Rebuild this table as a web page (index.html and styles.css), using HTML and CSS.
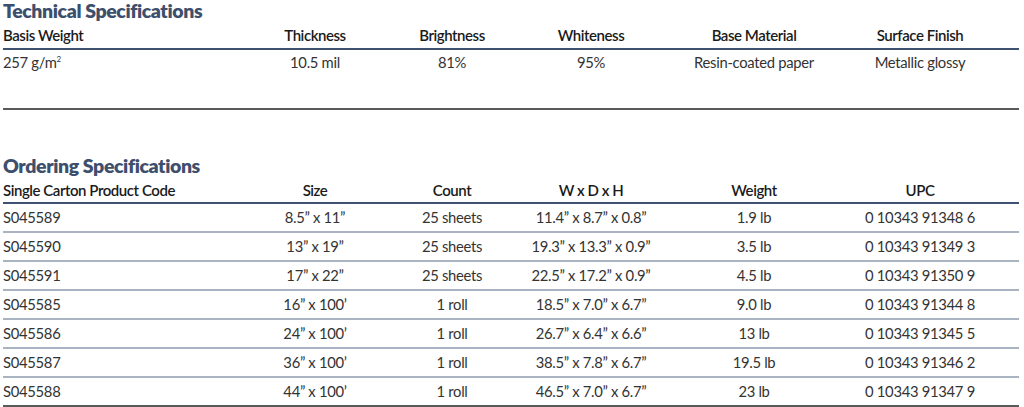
FILE: index.html
```html
<!DOCTYPE html>
<html lang="en">
<head>
<meta charset="utf-8">
<title>Specifications</title>
<link rel="stylesheet" href="styles.css">
</head>
<body>
<section class="spec spec-tech">
  <h2 class="spec-title">Technical Specifications</h2>
  <table class="spec-table">
    <colgroup>
      <col class="c1"><col class="c2"><col class="c3"><col class="c4"><col class="c5"><col class="c6">
    </colgroup>
    <thead>
      <tr>
        <th class="first">Basis Weight</th>
        <th>Thickness</th>
        <th>Brightness</th>
        <th>Whiteness</th>
        <th>Base Material</th>
        <th class="last">Surface Finish</th>
      </tr>
    </thead>
    <tbody>
      <tr class="tall">
        <td class="first">257 g/m<sup>2</sup></td>
        <td>10.5 mil</td>
        <td>81%</td>
        <td>95%</td>
        <td>Resin-coated paper</td>
        <td class="last">Metallic glossy</td>
      </tr>
    </tbody>
  </table>
</section>

<section class="spec spec-order">
  <h2 class="spec-title">Ordering Specifications</h2>
  <table class="spec-table">
    <colgroup>
      <col class="c1"><col class="c2"><col class="c3"><col class="c4"><col class="c5"><col class="c6">
    </colgroup>
    <thead>
      <tr>
        <th class="first">Single Carton Product Code</th>
        <th>Size</th>
        <th>Count</th>
        <th>W x D x H</th>
        <th>Weight</th>
        <th class="last">UPC</th>
      </tr>
    </thead>
    <tbody>
      <tr><td class="first">S045589</td><td>8.5&rdquo; x 11&rdquo;</td><td>25 sheets</td><td>11.4&rdquo; x 8.7&rdquo; x 0.8&rdquo;</td><td>1.9 lb</td><td class="last">0 10343 91348 6</td></tr>
      <tr><td class="first">S045590</td><td>13&rdquo; x 19&rdquo;</td><td>25 sheets</td><td>19.3&rdquo; x 13.3&rdquo; x 0.9&rdquo;</td><td>3.5 lb</td><td class="last">0 10343 91349 3</td></tr>
      <tr><td class="first">S045591</td><td>17&rdquo; x 22&rdquo;</td><td>25 sheets</td><td>22.5&rdquo; x 17.2&rdquo; x 0.9&rdquo;</td><td>4.5 lb</td><td class="last">0 10343 91350 9</td></tr>
      <tr><td class="first">S045585</td><td>16&rdquo; x 100&rsquo;</td><td>1 roll</td><td>18.5&rdquo; x 7.0&rdquo; x 6.7&rdquo;</td><td>9.0 lb</td><td class="last">0 10343 91344 8</td></tr>
      <tr><td class="first">S045586</td><td>24&rdquo; x 100&rsquo;</td><td>1 roll</td><td>26.7&rdquo; x 6.4&rdquo; x 6.6&rdquo;</td><td>13 lb</td><td class="last">0 10343 91345 5</td></tr>
      <tr><td class="first">S045587</td><td>36&rdquo; x 100&rsquo;</td><td>1 roll</td><td>38.5&rdquo; x 7.8&rdquo; x 6.7&rdquo;</td><td>19.5 lb</td><td class="last">0 10343 91346 2</td></tr>
      <tr class="end"><td class="first">S045588</td><td>44&rdquo; x 100&rsquo;</td><td>1 roll</td><td>46.5&rdquo; x 7.0&rdquo; x 6.7&rdquo;</td><td>23 lb</td><td class="last">0 10343 91347 9</td></tr>
    </tbody>
  </table>
</section>
</body>
</html>
```

FILE: styles.css
```css
* { box-sizing: border-box; }

html, body {
  margin: 0;
  padding: 0;
  background: #ffffff;
}

body {
  font-family: "Lato", "Liberation Sans", sans-serif;
  color: #2b2b2b;
  padding: 0 5px 0 3px;
  width: 1024px;
}

.spec-title {
  margin: 0;
  font-size: 19.5px;
  line-height: 22px;
  font-weight: 800;
  color: #3d4f6c;
  letter-spacing: -0.4px;
}

.spec-order {
  margin-top: 45px;
}

.spec-table {
  width: 1016px;
  border-collapse: collapse;
  table-layout: fixed;
}

.c1 { width: 250px; }
.c2 { width: 124px; }
.c3 { width: 150px; }
.c4 { width: 128px; }
.c5 { width: 198px; }
.c6 { width: 166px; }

.spec-table th,
.spec-table td {
  padding: 0;
  text-align: center;
  white-space: nowrap;
  font-size: 14.8px;
}

.spec-table th.first,
.spec-table td.first {
  text-align: left;
}

.spec-table th.last,
.spec-table td.last {
  padding-right: 32px;
}

.spec-table th {
  font-size: 15px;
  font-weight: 600;
  color: #1a1a1a;
  height: 27px;
  line-height: 18px;
  padding-top: 4px;
  vertical-align: top;
  letter-spacing: -0.45px;
  border-bottom: 2px solid #3f5170;
}

.spec-order .spec-table th {
  height: 26px;
  padding-top: 4px;
}

.spec-table td {
  font-weight: 400;
  color: #333333;
  height: 29px;
  line-height: 27px;
  letter-spacing: -0.3px;
  border-bottom: 2px solid #a9b3c2;
}

.spec-table tr.tall td {
  height: 60px;
  vertical-align: top;
  line-height: 18px;
  padding-top: 3px;
  border-bottom: 2px solid #5a5a5a;
}

.spec-table tr.end td {
  border-bottom: 2px solid #5a5a5a;
}

sup {
  font-size: 8px;
  line-height: 0;
  vertical-align: 6px;
}
```
